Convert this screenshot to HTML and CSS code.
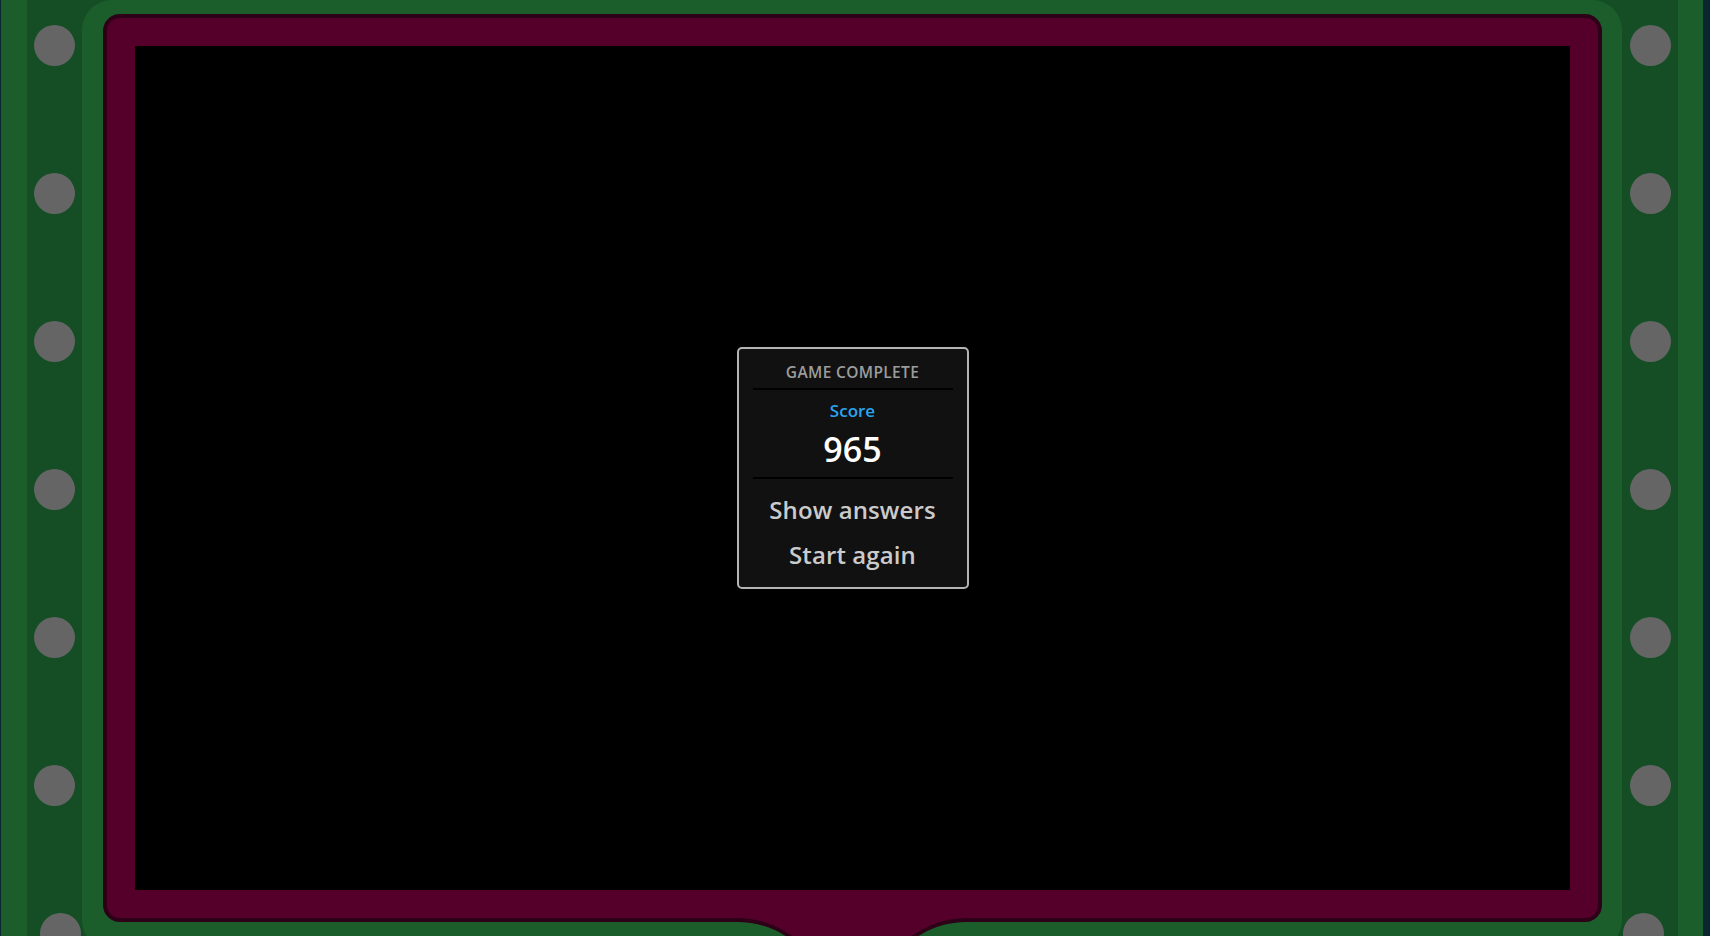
FILE: index.html
```html
<!DOCTYPE html>
<html lang="en">
<head>
<meta charset="utf-8">
<title>Game complete</title>
<link rel="stylesheet" href="styles.css">
</head>
<body>
<div class="board">
  <div class="rails">
    <div class="track track--left">
      <span class="dot"></span><span class="dot"></span><span class="dot"></span><span class="dot"></span><span class="dot"></span><span class="dot"></span><span class="dot dot--corner-left"></span>
    </div>
    <div class="frame">
      <div class="panel">
        <div class="screen">
          <div class="dialog">
            <div class="dialog-title">Game complete</div>
            <div class="divider"></div>
            <div class="score-label">Score</div>
            <div class="score-value">965</div>
            <div class="divider divider--low"></div>
            <button class="action action--first">Show answers</button>
            <button class="action">Start again</button>
          </div>
        </div>
        <svg class="tab" width="300" height="30" viewBox="0 0 300 30" aria-hidden="true">
          <path d="M0,0 L0,6 L35,6 A90,90 0 0 1 96.2,30 L203.8,30 A90,90 0 0 1 265,6 L300,6 L300,0 Z" fill="#2d0017"/>
          <path d="M0,0 L0,2 L35,2 A94,94 0 0 1 101.9,30 L198.1,30 A94,94 0 0 1 265,2 L300,2 L300,0 Z" fill="#55002a"/>
        </svg>
      </div>
    </div>
    <div class="track track--right">
      <span class="dot"></span><span class="dot"></span><span class="dot"></span><span class="dot"></span><span class="dot"></span><span class="dot"></span><span class="dot dot--corner-right"></span>
    </div>
  </div>
</div>
</body>
</html>
```
FILE: styles.css
```css
html, body {
  margin: 0;
  padding: 0;
}

body {
  background: #0a2630;
  height: 936px;
  overflow: hidden;
  font-family: "Open Sans", "Noto Sans", "Liberation Sans", sans-serif;
}

.board {
  margin-left: 1px;
  width: 1702px;
  height: 936px;
  box-sizing: border-box;
  padding: 0 25px 0 26px;
  background: #1b5e2c;
  display: flex;
}

.rails {
  flex: 1;
  display: flex;
  background: #154e25;
  height: 936px;
}

.track {
  flex: none;
  display: flex;
  flex-direction: column;
  align-items: center;
  gap: 107px;
  padding-top: 25px;
  box-sizing: border-box;
}

.track--left { width: 55px; }
.track--right { width: 56px; }

.dot {
  flex: none;
  width: 41px;
  height: 41px;
  border-radius: 50%;
  background: #656565;
}

.dot--corner-left { transform: translateX(6px); }
.dot--corner-right { transform: translateX(-7px); }

.frame {
  flex: none;
  width: 1540px;
  height: 950px;
  box-sizing: border-box;
  padding: 14px 20px 0 21px;
  background: #1b5e2c;
  border-radius: 30px;
}

.panel {
  position: relative;
  height: 908px;
  box-sizing: border-box;
  padding: 28px;
  background: #55002a;
  border: 4px solid #2d0017;
  border-radius: 17px;
  display: flex;
}

.tab {
  position: absolute;
  left: calc(50% - 151px);
  top: calc(100% - 2px);
  display: block;
}

.screen {
  flex: 1;
  background: #000;
  display: flex;
  align-items: center;
  justify-content: center;
}

.dialog {
  width: 232px;
  height: 242px;
  box-sizing: border-box;
  padding: 13px 14px 0;
  background: #111111;
  border: 2px solid #b4b4b4;
  border-radius: 5px;
  display: flex;
  flex-direction: column;
  align-items: stretch;
  text-align: center;
}

.dialog-title {
  flex: none;
  height: 20px;
  font-size: 15.5px;
  line-height: 20px;
  font-weight: 600;
  letter-spacing: 0.35px;
  color: #9c9c9c;
  text-transform: uppercase;
}

.divider {
  flex: none;
  height: 2px;
  background: #000;
  margin-top: 6px;
}

.divider--low {
  margin-top: 8px;
}

.score-label {
  flex: none;
  height: 23px;
  margin-top: 9px;
  font-size: 17px;
  line-height: 23px;
  font-weight: 600;
  color: #2ba4ee;
}

.score-value {
  flex: none;
  height: 40px;
  margin-top: 7px;
  font-size: 34px;
  line-height: 40px;
  font-weight: 600;
  color: #ffffff;
}

.action {
  flex: none;
  display: block;
  height: 32px;
  margin: 13px 0 0;
  padding: 0;
  border: 0;
  background: transparent;
  font-family: inherit;
  font-size: 24px;
  line-height: 32px;
  font-weight: 600;
  letter-spacing: 0.1px;
  color: #cbcbcb;
  cursor: pointer;
}

.action--first {
  margin-top: 15px;
}
```
